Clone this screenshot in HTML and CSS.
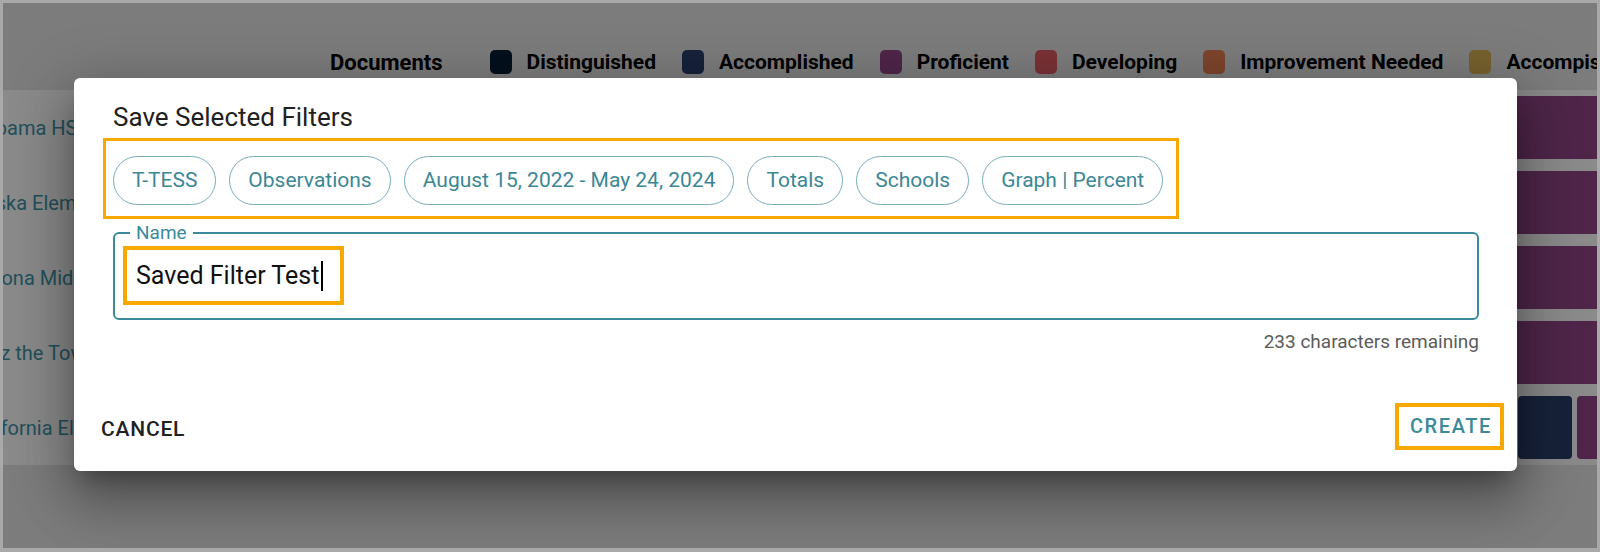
FILE: index.html
```html
<!DOCTYPE html>
<html lang="en">
<head>
    <meta charset="UTF-8">
    <meta name="viewport" content="width=device-width, initial-scale=1.0">
    <title>Save Selected Filters</title>
    <link rel="stylesheet" href="styles.css">
</head>
<body>

<div class="frame">
    <div class="page">
        <div class="legend">
            <span class="legend-title">Documents</span>
            <span class="legend-item"><span class="swatch swatch-distinguished"></span>Distinguished</span>
            <span class="legend-item"><span class="swatch swatch-accomplished"></span>Accomplished</span>
            <span class="legend-item"><span class="swatch swatch-proficient"></span>Proficient</span>
            <span class="legend-item"><span class="swatch swatch-developing"></span>Developing</span>
            <span class="legend-item"><span class="swatch swatch-improvement"></span>Improvement Needed</span>
            <span class="legend-item"><span class="swatch swatch-accompished"></span>Accompished</span>
        </div>

        <div class="results">
            <div class="result-row">
                <div class="school">Alabama HS</div>
                <div class="bar">
                    <span class="seg swatch-distinguished" style="flex-basis:260px"></span>
                    <span class="seg swatch-accomplished" style="flex-basis:420px"></span>
                    <span class="seg swatch-proficient" style="flex-basis:705px"></span>
                </div>
            </div>
            <div class="result-row">
                <div class="school">Alaska Elementary</div>
                <div class="bar">
                    <span class="seg swatch-distinguished" style="flex-basis:310px"></span>
                    <span class="seg swatch-accomplished" style="flex-basis:370px"></span>
                    <span class="seg swatch-proficient" style="flex-basis:705px"></span>
                </div>
            </div>
            <div class="result-row">
                <div class="school">Arizona Middle</div>
                <div class="bar">
                    <span class="seg swatch-distinguished" style="flex-basis:200px"></span>
                    <span class="seg swatch-accomplished" style="flex-basis:480px"></span>
                    <span class="seg swatch-proficient" style="flex-basis:705px"></span>
                </div>
            </div>
            <div class="result-row">
                <div class="school">Buzz the Tower</div>
                <div class="bar">
                    <span class="seg swatch-distinguished" style="flex-basis:240px"></span>
                    <span class="seg swatch-accomplished" style="flex-basis:440px"></span>
                    <span class="seg swatch-proficient" style="flex-basis:705px"></span>
                </div>
            </div>
            <div class="result-row">
                <div class="school">California Elementary</div>
                <div class="bar">
                    <span class="seg swatch-distinguished" style="flex-basis:500px"></span>
                    <span class="seg swatch-proficient" style="flex-basis:628px"></span>
                    <span class="seg swatch-accomplished" style="flex-basis:54px"></span>
                    <span class="seg swatch-proficient" style="flex-basis:198px"></span>
                </div>
            </div>
        </div>
    </div>

    <div class="backdrop">
        <div class="dialog">
            <h2 class="dialog-title">Save Selected Filters</h2>

            <div class="chip-set">
                <span class="chip">T-TESS</span>
                <span class="chip">Observations</span>
                <span class="chip">August 15, 2022 - May 24, 2024</span>
                <span class="chip">Totals</span>
                <span class="chip">Schools</span>
                <span class="chip">Graph | Percent</span>
            </div>

            <fieldset class="name-field">
                <legend class="name-label">Name</legend>
                <div class="name-value">Saved Filter Test<span class="caret"></span></div>
            </fieldset>
            <p class="helper">233 characters remaining</p>

            <div class="actions">
                <button class="btn btn-cancel" type="button">Cancel</button>
                <button class="btn btn-create" type="button">Create</button>
            </div>
        </div>
    </div>
</div>

</body>
</html>
```

FILE: styles.css
```css
body {
    margin: 0;
    font-family: Roboto, 'Noto Sans', sans-serif;
}
.frame {
    position: relative;
    width: 1600px;
    height: 552px;
    box-sizing: border-box;
    border: 3px solid #a9a9a9;
    border-bottom-width: 4px;
    overflow: hidden;
    background: #e6e6e6;
}

/* page behind the dialog */
.legend {
    display: flex;
    align-items: center;
    gap: 26px;
    height: 24px;
    padding: 47px 0 0 327px;
    white-space: nowrap;
    font-size: 21px;
    font-weight: 700;
    color: #000;
}
.legend-title {
    margin-right: 21px;
    font-size: 22px;
}
.legend-item {
    display: flex;
    align-items: center;
    gap: 15px;
    flex-shrink: 0;
}
.swatch {
    width: 22px;
    height: 24px;
    border-radius: 5px;
}
.swatch-distinguished { background: #0b1f39; }
.swatch-accomplished { background: #2b3f6b; }
.swatch-proficient { background: #924687; }
.swatch-developing { background: #e25d64; }
.swatch-improvement { background: #e78053; }
.swatch-accompished { background: #dcb455; }

.results {
    display: flex;
    flex-direction: column;
    gap: 12px;
    width: 1720px;
    margin: 16px 0 0 -36px;
    padding: 6px 0;
    background: #fff;
}
.result-row {
    display: flex;
    align-items: center;
    height: 63px;
}
.school {
    flex-shrink: 0;
    width: 107px;
    overflow: hidden;
    font-size: 20px;
    color: #3f95a8;
    white-space: nowrap;
}
.bar {
    display: flex;
    gap: 5px;
    height: 100%;
    width: 1400px;
    margin-left: 306px;
}
.seg {
    flex-shrink: 0;
    border-radius: 4px;
}

/* modal */
.backdrop {
    position: absolute;
    inset: 0;
    display: flex;
    align-items: center;
    justify-content: center;
    padding: 0 9px 2px 0;
    background: rgba(0, 0, 0, 0.46);
}
.dialog {
    width: 1443px;
    box-sizing: border-box;
    padding: 23px 38px 21px 39px;
    background: #fff;
    border-radius: 6px;
    box-shadow: 0 14px 20px -9px rgba(0, 0, 0, 0.3),
                0 31px 50px 4px rgba(0, 0, 0, 0.22),
                0 12px 60px 10px rgba(0, 0, 0, 0.18);
}
.dialog-title {
    margin: 0;
    font-size: 26px;
    font-weight: 400;
    line-height: 32px;
    color: #212121;
}
.chip-set {
    display: flex;
    gap: 13px;
    width: max-content;
    margin: 5px 0 0 -10px;
    padding: 15px 13px 11px 7px;
    border: 3px solid #f9a800;
}
.chip {
    height: 49px;
    box-sizing: border-box;
    padding: 0 18px;
    border: 1.5px solid #78adbb;
    border-radius: 25px;
    font-size: 21px;
    line-height: 46px;
    color: #3b8796;
}
.name-field {
    min-width: 0;
    margin: 4px 0 0;
    padding: 3px 8px 13px;
    border: 2px solid #3a8a9a;
    border-radius: 6px;
}
.name-label {
    margin-left: 7px;
    padding: 0 6px;
    font-size: 19px;
    line-height: 20px;
    color: #3a8a9a;
}
.name-value {
    display: inline-flex;
    align-items: center;
    height: 51px;
    padding: 0 17px 0 9px;
    border: 4px solid #f9a800;
    font-size: 25px;
    color: #111;
}
.caret {
    width: 1.5px;
    height: 30px;
    margin-left: 2px;
    background: #000;
}
.helper {
    margin: 11px 0 0;
    text-align: right;
    font-size: 19px;
    line-height: 22px;
    color: #5b5b5b;
}
.actions {
    display: flex;
    justify-content: space-between;
    align-items: center;
    margin: 50px -25px 0 -12px;
}
.btn {
    padding: 0;
    background: none;
    border: none;
    font-family: inherit;
    font-size: 20px;
    font-weight: 500;
    letter-spacing: 1.6px;
    line-height: 39px;
    text-transform: uppercase;
    cursor: pointer;
}
.btn-cancel {
    padding-top: 5px;
    font-size: 21px;
    letter-spacing: 0.8px;
    color: #212121;
}
.btn-create {
    padding: 0 8px 0 11px;
    border: 4px solid #f9a800;
    color: #3a8a9a;
}
```
